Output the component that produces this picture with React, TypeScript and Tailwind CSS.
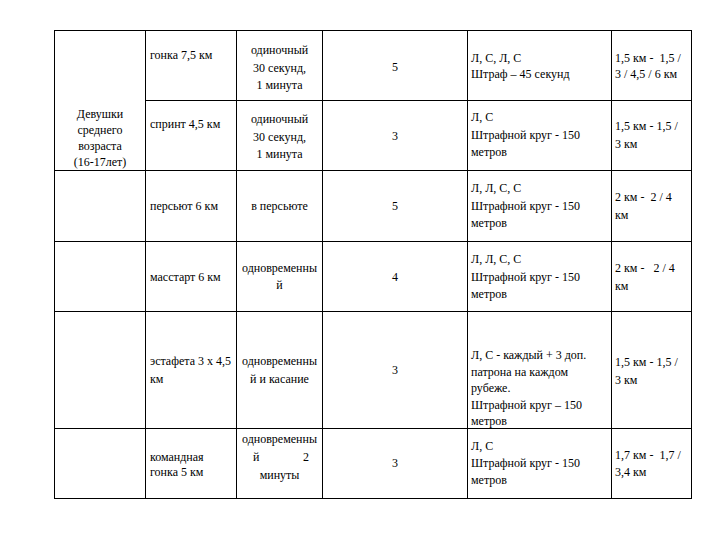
import React from "react";

type CellProps = {
  pt: string;
  cls?: string;
  children: React.ReactNode;
};

function Cell({ pt, cls = "", children }: CellProps) {
  return (
    <div className={`border-r border-b border-black ${cls}`}>
      <div className={pt}>{children}</div>
    </div>
  );
}

export default function App() {
  return (
    <div className="w-[720px] h-[540px] bg-white text-black [font-family:'Liberation_Serif','Times_New_Roman',serif] text-[12px] pl-[54px] pt-[30px]">
      <div className="grid w-max grid-cols-[91px_91px_86px_145px_144px_80px] grid-rows-[70px_70px_71px_70px_117px_70px] border-l border-t border-black">
        {/* Column 1 merged */}
        <div className="row-span-2 border-r border-b border-black">
          <div className="pt-[75px] text-center leading-[16px]">
            <div>Девушки</div>
            <div>среднего</div>
            <div>возраста</div>
            <div>(16-17лет)</div>
          </div>
        </div>

        {/* Row 1 */}
        <Cell pt="pt-[16px] pl-[4px] leading-[17px]">гонка 7,5 км</Cell>
        <Cell pt="pt-[11px] text-center leading-[17.5px]">
          <div>одиночный</div>
          <div>30 секунд,</div>
          <div>1 минута</div>
        </Cell>
        <Cell pt="pt-[28px] text-center leading-[17px]">5</Cell>
        <Cell pt="pt-[19px] pl-[3px] leading-[16px] whitespace-nowrap">
          <div>Л, С, Л, С</div>
          <div>Штраф – 45 секунд</div>
        </Cell>
        <Cell pt="pt-[19px] pl-[3px] leading-[16px] whitespace-pre">
          <div>{"1,5 км -  1,5 /"}</div>
          <div>3 / 4,5 / 6 км</div>
        </Cell>

        {/* Row 2 */}
        <Cell pt="pt-[15px] pl-[4px] leading-[17px]">спринт 4,5 км</Cell>
        <Cell pt="pt-[10px] text-center leading-[17.5px]">
          <div>одиночный</div>
          <div>30 секунд,</div>
          <div>1 минута</div>
        </Cell>
        <Cell pt="pt-[27px] text-center leading-[17px]">3</Cell>
        <Cell pt="pt-[8px] pl-[3px] leading-[17.5px] whitespace-nowrap">
          <div>Л, С</div>
          <div>Штрафной круг - 150</div>
          <div>метров</div>
        </Cell>
        <Cell pt="pt-[16px] pl-[3px] leading-[18px] whitespace-pre">
          <div>{"1,5 км - 1,5 /"}</div>
          <div>3 км</div>
        </Cell>

        {/* Row 3 */}
        <div className="border-r border-b border-black" />
        <Cell pt="pt-[27px] pl-[4px] leading-[17px]">персьют 6 км</Cell>
        <Cell pt="pt-[27px] text-center leading-[17px]">в персьюте</Cell>
        <Cell pt="pt-[27px] text-center leading-[17px]">5</Cell>
        <Cell pt="pt-[9px] pl-[3px] leading-[17.5px] whitespace-nowrap">
          <div>Л, Л, С, С</div>
          <div>Штрафной круг - 150</div>
          <div>метров</div>
        </Cell>
        <Cell pt="pt-[17px] pl-[3px] leading-[18px] whitespace-pre">
          <div>{"2 км -  2 / 4"}</div>
          <div>км</div>
        </Cell>

        {/* Row 4 */}
        <div className="border-r border-b border-black" />
        <Cell pt="pt-[27px] pl-[4px] leading-[17px]">масстарт 6 км</Cell>
        <Cell pt="pt-[18px] text-center leading-[17px]">
          <div>одновременны</div>
          <div>й</div>
        </Cell>
        <Cell pt="pt-[27px] text-center leading-[17px]">4</Cell>
        <Cell pt="pt-[9px] pl-[3px] leading-[17.5px] whitespace-nowrap">
          <div>Л, Л, С, С</div>
          <div>Штрафной круг - 150</div>
          <div>метров</div>
        </Cell>
        <Cell pt="pt-[17px] pl-[3px] leading-[18px] whitespace-pre">
          <div>{"2 км -   2 / 4"}</div>
          <div>км</div>
        </Cell>

        {/* Row 5 */}
        <div className="border-r border-b border-black" />
        <Cell pt="pt-[40px] pl-[4px] leading-[18px] whitespace-nowrap">
          <div>эстафета 3 х 4,5</div>
          <div>км</div>
        </Cell>
        <Cell pt="pt-[40px] text-center leading-[18px]">
          <div>одновременны</div>
          <div>й и касание</div>
        </Cell>
        <Cell pt="pt-[50px] text-center leading-[17px]">3</Cell>
        <Cell pt="pt-[35px] pl-[3px] leading-[16.5px] whitespace-nowrap">
          <div>Л, С - каждый + 3 доп.</div>
          <div>патрона на каждом</div>
          <div>рубеже.</div>
          <div>Штрафной круг – 150</div>
          <div>метров</div>
        </Cell>
        <Cell pt="pt-[41px] pl-[3px] leading-[18px] whitespace-pre">
          <div>{"1,5 км - 1,5 /"}</div>
          <div>3 км</div>
        </Cell>

        {/* Row 6 */}
        <div className="border-r border-b border-black" />
        <Cell pt="pt-[21px] pl-[4px] leading-[15px] whitespace-nowrap">
          <div>командная</div>
          <div>гонка 5 км</div>
        </Cell>
        <Cell pt="pt-[1px] text-center leading-[18px]">
          <div>одновременны</div>
          <div className="flex justify-between pl-[16px] pr-[13px]">
            <span>й</span>
            <span>2</span>
          </div>
          <div>минуты</div>
        </Cell>
        <Cell pt="pt-[26px] text-center leading-[17px]">3</Cell>
        <Cell pt="pt-[9px] pl-[3px] leading-[17px] whitespace-nowrap">
          <div>Л, С</div>
          <div>Штрафной круг - 150</div>
          <div>метров</div>
        </Cell>
        <Cell pt="pt-[18px] pl-[3px] leading-[17px] whitespace-pre">
          <div>{"1,7 км -  1,7 /"}</div>
          <div>3,4 км</div>
        </Cell>
      </div>
    </div>
  );
}
